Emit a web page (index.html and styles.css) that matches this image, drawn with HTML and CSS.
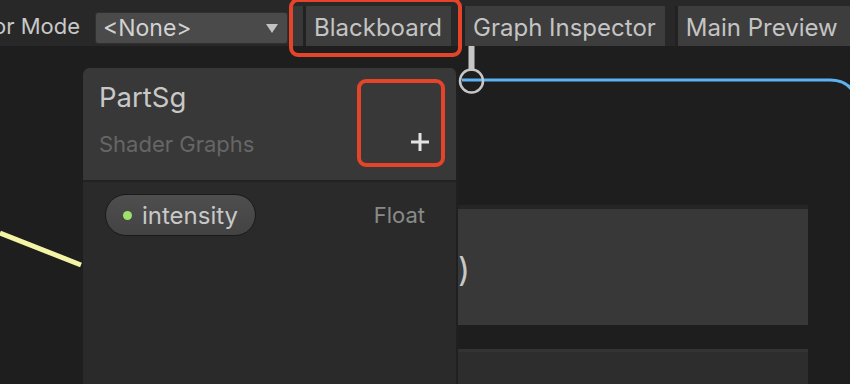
FILE: index.html
```html
<!DOCTYPE html>
<html lang="en">
<head>
    <meta charset="UTF-8">
    <meta name="viewport" content="width=device-width, initial-scale=1.0">
    <title>Shader Graph - Blackboard</title>
    <link rel="stylesheet" href="styles.css">
</head>
<body>
    <div class="toolbar">
        <div class="mode-label"><span>Color Mode</span></div>
        <div class="dropdown">
            <span>&lt;None&gt;</span>
            <span class="arrow"></span>
        </div>
        <div class="spacer"></div>
        <button class="tool-btn">Blackboard</button>
        <button class="tool-btn">Graph Inspector</button>
        <button class="tool-btn last">Main Preview</button>
        <div class="highlight hl-blackboard"></div>
    </div>

    <div class="canvas">
        <svg class="wires" width="850" height="338" viewBox="0 0 850 338">
            <line x1="0" y1="187" x2="81" y2="219" stroke="#f4f4a6" stroke-width="5"/>
            <path d="M462 34 H830 Q850 34 856 52" fill="none" stroke="#5cb2f2" stroke-width="3"/>
            <rect x="468.5" y="0" width="6" height="25" fill="#c6c6c6"/>
            <circle cx="471.5" cy="35" r="11.5" fill="none" stroke="#c6c6c6" stroke-width="2.5"/>
        </svg>

        <div class="node node-top">
            <span class="node-text">)</span>
        </div>
        <div class="node node-bottom"></div>

        <div class="blackboard">
            <div class="bb-header">
                <div class="bb-titles">
                    <div class="bb-title">PartSg</div>
                    <div class="bb-subtitle">Shader Graphs</div>
                </div>
                <div class="bb-add">
                    <svg width="20" height="20" viewBox="0 0 20 20">
                        <path d="M10 1 V19 M1 10 H19" stroke="#e2e2e2" stroke-width="3"/>
                    </svg>
                </div>
            </div>
            <div class="bb-body">
                <div class="prop-row">
                    <div class="pill">
                        <span class="dot"></span>
                        <span>intensity</span>
                    </div>
                    <div class="prop-type">Float</div>
                </div>
            </div>
        </div>
    </div>
</body>
</html>
```

FILE: styles.css
```css
body {
    margin: 0;
    width: 850px;
    height: 384px;
    overflow: hidden;
    background-color: #1e1e1e;
    font-family: Inter, "Noto Sans", sans-serif;
    color: #c4c4c4;
}
.toolbar {
    position: relative;
    display: flex;
    align-items: flex-end;
    height: 46px;
    background-color: #282828;
}
.mode-label {
    flex: none;
    display: flex;
    justify-content: flex-end;
    box-sizing: border-box;
    width: 95px;
    padding: 0 15px 7px 0;
    overflow: hidden;
    font-size: 22px;
    color: #c8c8c8;
    white-space: nowrap;
}
.dropdown {
    flex: none;
    display: flex;
    align-items: center;
    justify-content: space-between;
    box-sizing: border-box;
    width: 193px;
    height: 32px;
    margin-bottom: 2px;
    padding: 0 8px 0 7px;
    background-color: #4a4a4a;
    border: 1px solid #303030;
    border-radius: 3px;
    font-size: 23px;
    color: #d2d2d2;
}
.arrow {
    width: 0;
    height: 0;
    margin-right: 1px;
    border-left: 6px solid transparent;
    border-right: 6px solid transparent;
    border-top: 9px solid #c2c2c2;
}
.spacer {
    flex: none;
    width: 15px;
    height: 40px;
    background-color: #383838;
    border-left: 5px solid #282828;
    box-sizing: border-box;
}
.tool-btn {
    flex: none;
    height: 40px;
    padding: 2px 9px 0 8px;
    background-color: #3d3d3d;
    border: none;
    border-left: 3px solid #222;
    color: #c4c4c4;
    font-family: inherit;
    font-size: 24px;
    white-space: nowrap;
}
.tool-btn + .tool-btn {
    margin-left: 11px;
}
.tool-btn.last {
    flex: 1;
    margin-left: 10px;
    text-align: left;
}
.highlight {
    position: absolute;
    box-sizing: border-box;
    border: 4px solid #e5442b;
    border-radius: 9px;
}
.hl-blackboard {
    left: 289px;
    top: -2px;
    width: 173px;
    height: 59px;
}
.canvas {
    position: relative;
    height: 338px;
    overflow: hidden;
}
.wires {
    position: absolute;
    left: 0;
    top: 0;
}
.node {
    position: absolute;
    left: 456px;
    width: 352px;
}
.node-top {
    top: 159px;
    height: 116px;
    background-color: #383838;
    border-top: 4px solid #252525;
    display: flex;
    align-items: center;
}
.node-text {
    margin-left: 2px;
    margin-top: 4px;
    font-size: 33px;
    color: #c8c8c8;
}
.node-bottom {
    top: 303px;
    height: 60px;
    background-color: #2d2d2d;
    border-top: 3px solid #333;
}
.blackboard {
    position: absolute;
    left: 83px;
    top: 22px;
    width: 373px;
    height: 330px;
    background-color: #2a2a2a;
    border-right: 2px solid #202020;
    border-radius: 7px 7px 0 0;
    overflow: hidden;
}
.bb-header {
    display: flex;
    justify-content: space-between;
    height: 112px;
    padding: 0 11px 0 16px;
    background-color: #383838;
    border-bottom: 2px solid #222;
}
.bb-titles {
    padding-top: 12px;
}
.bb-title {
    font-size: 27.5px;
    color: #c8c8c8;
}
.bb-subtitle {
    margin-top: 17px;
    font-size: 22px;
    color: #666;
}
.bb-add {
    display: flex;
    align-items: flex-end;
    justify-content: flex-end;
    box-sizing: border-box;
    width: 88px;
    height: 88px;
    margin-top: 11px;
    padding: 0 11px 11px 0;
    border: 4px solid #e5442b;
    border-radius: 9px;
}
.bb-body {
    padding: 12px 31px 0 22px;
}
.prop-row {
    display: flex;
    align-items: center;
    justify-content: space-between;
}
.pill {
    display: flex;
    align-items: center;
    gap: 10px;
    box-sizing: border-box;
    height: 42px;
    padding: 0 17px 0 17px;
    background: linear-gradient(#4e4e4e, #434343);
    border: 1px solid #1a1a1a;
    border-radius: 21px;
    font-size: 24px;
    color: #c8c8c8;
}
.dot {
    width: 9px;
    height: 9px;
    border-radius: 50%;
    background-color: #9ee26c;
}
.prop-type {
    font-size: 22px;
    color: #8a8a8a;
}
```
